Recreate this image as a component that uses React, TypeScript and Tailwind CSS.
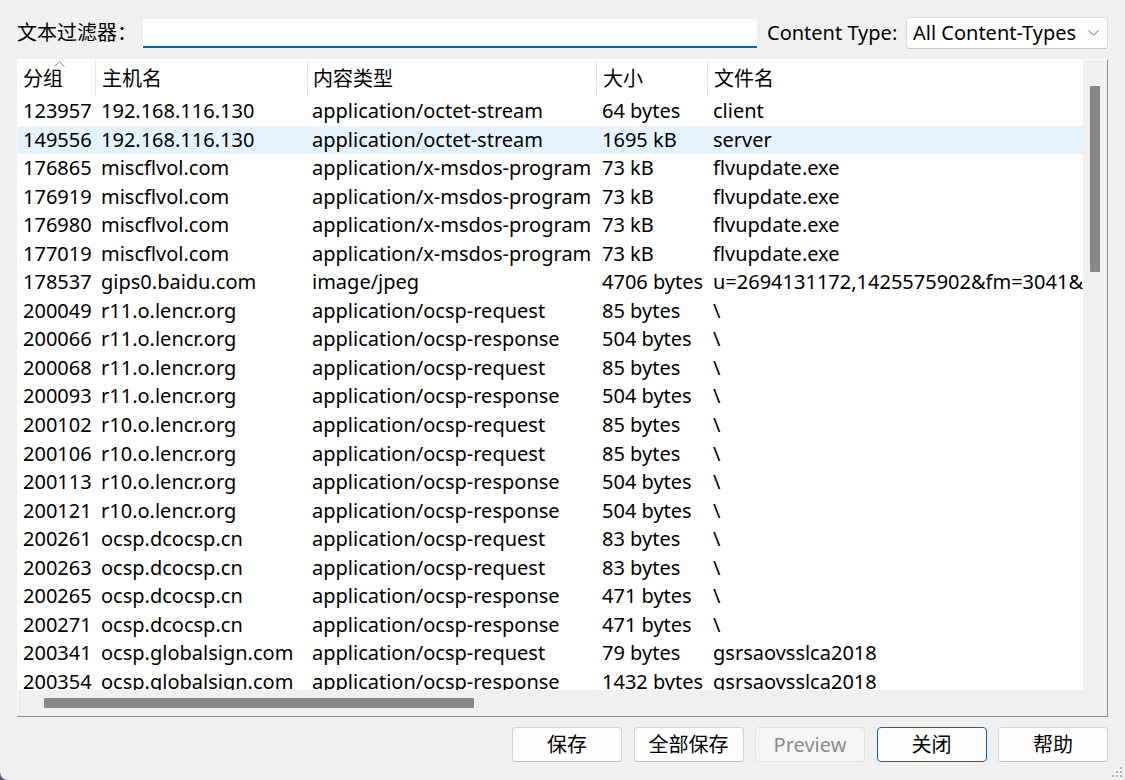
import React from "react";

// Export objects dialog: filter row, packet object list, buttons
const rows: [string, string, string, string, string][] = [
  ["123957", "192.168.116.130", "application/octet-stream", "64 bytes", "client"],
  ["149556", "192.168.116.130", "application/octet-stream", "1695 kB", "server"],
  ["176865", "miscflvol.com", "application/x-msdos-program", "73 kB", "flvupdate.exe"],
  ["176919", "miscflvol.com", "application/x-msdos-program", "73 kB", "flvupdate.exe"],
  ["176980", "miscflvol.com", "application/x-msdos-program", "73 kB", "flvupdate.exe"],
  ["177019", "miscflvol.com", "application/x-msdos-program", "73 kB", "flvupdate.exe"],
  ["178537", "gips0.baidu.com", "image/jpeg", "4706 bytes", "u=2694131172,1425575902&fm=3041&app=3041&f=JPEG"],
  ["200049", "r11.o.lencr.org", "application/ocsp-request", "85 bytes", "\\"],
  ["200066", "r11.o.lencr.org", "application/ocsp-response", "504 bytes", "\\"],
  ["200068", "r11.o.lencr.org", "application/ocsp-request", "85 bytes", "\\"],
  ["200093", "r11.o.lencr.org", "application/ocsp-response", "504 bytes", "\\"],
  ["200102", "r10.o.lencr.org", "application/ocsp-request", "85 bytes", "\\"],
  ["200106", "r10.o.lencr.org", "application/ocsp-request", "85 bytes", "\\"],
  ["200113", "r10.o.lencr.org", "application/ocsp-response", "504 bytes", "\\"],
  ["200121", "r10.o.lencr.org", "application/ocsp-response", "504 bytes", "\\"],
  ["200261", "ocsp.dcocsp.cn", "application/ocsp-request", "83 bytes", "\\"],
  ["200263", "ocsp.dcocsp.cn", "application/ocsp-request", "83 bytes", "\\"],
  ["200265", "ocsp.dcocsp.cn", "application/ocsp-response", "471 bytes", "\\"],
  ["200271", "ocsp.dcocsp.cn", "application/ocsp-response", "471 bytes", "\\"],
  ["200341", "ocsp.globalsign.com", "application/ocsp-request", "79 bytes", "gsrsaovsslca2018"],
  ["200354", "ocsp.globalsign.com", "application/ocsp-response", "1432 bytes", "gsrsaovsslca2018"],
];

const headers = ["分组", "主机名", "内容类型", "大小", "文件名"];

// column widths, written out in full for tailwind
const colW = ["w-[77px] pl-[5px]", "w-[212px] pl-[6px]", "w-[289px] pl-[5px]", "w-[111px] pl-[6px]", "flex-1 pl-[6px]"];

const font = { fontFamily: '"Noto Sans", "Noto Sans CJK SC", sans-serif' };

function Button({ label, variant }: { label: string; variant?: "default" | "disabled" }) {
  let cls = "bg-[#fdfdfd] border-[#d3d3d3] border-b-[#bdbdbd] text-black";
  if (variant === "default") cls = "bg-[#fdfdfd] border-[#0067c0] text-black";
  if (variant === "disabled") cls = "bg-[#f5f5f5] border-[#e3e3e3] text-[#8c8c8c]";
  return (
    <button className={`w-[110px] h-[35px] rounded-[4px] border text-[20px] leading-none flex items-center justify-center ${cls}`}>
      {label}
    </button>
  );
}

export default function App() {
  return (
    <div className="relative w-[1125px] h-[780px] bg-[#f0f0f0] overflow-hidden text-black" style={font}>
      {/* filter row */}
      <div className="flex items-center px-[17px] pt-[17px] h-[49px]">
        <span className="w-[126px] shrink-0 text-[20px] leading-[32px]">文本过滤器：</span>
        <div className="w-[614px] h-[29px] bg-white border-b-2 border-[#0067c0] rounded-t-[3px]"></div>
        <span className="ml-[10px] text-[20px] leading-[32px] whitespace-nowrap">Content Type:</span>
        <div className="ml-auto w-[202px] h-[32px] bg-white border border-[#dadada] border-b-[#c6c6c6] rounded-[4px] flex items-center pl-[6px] pr-[8px]">
          <span className="flex-1 text-[20px] leading-none whitespace-nowrap">All Content-Types</span>
          <svg width="11" height="6" viewBox="0 0 11 6">
            <path d="M0.5 0.5 L5.5 5 L10.5 0.5" fill="none" stroke="#6b6b6b" strokeWidth="1" />
          </svg>
        </div>
      </div>

      {/* object list */}
      <div className="mt-[10px] ml-[17px] w-[1091px] h-[658px] border-l border-t border-white border-r border-b border-r-[#8c9097] border-b-[#8c9097] grid grid-cols-[1065px_24px] grid-rows-[630px_26px]">
        <div className="bg-white flex flex-col overflow-hidden">
          <div className="relative h-[37px] shrink-0 flex text-[20px] leading-[37px]">
            {headers.map((h, i) => (
              <div key={h} className={`${colW[i]} whitespace-nowrap ${i > 0 ? "border-l border-[#e5e5e5]" : ""}`}>
                {h}
              </div>
            ))}
            <svg className="absolute left-[36px] top-[1px]" width="11" height="6" viewBox="0 0 11 6">
              <path d="M0.5 5.5 L5.5 0.8 L10.5 5.5" fill="none" stroke="#8a8a8a" strokeWidth="1" />
            </svg>
          </div>
          {rows.map((r, ri) => (
            <div
              key={r[0]}
              className={`h-[28.55px] shrink-0 flex text-[20px] leading-[28.55px] ${ri === 1 ? "bg-[#e5f3ff]" : ""}`}
            >
              {r.map((c, ci) => (
                <div key={ci} className={`${colW[ci]} whitespace-nowrap overflow-hidden`}>
                  {c}
                </div>
              ))}
            </div>
          ))}
        </div>

        {/* vertical scrollbar */}
        <div className="bg-[#f0f0f0] pt-[26px] pl-[7px]">
          <div className="w-[10px] h-[186px] bg-[#878787] rounded-[1px]"></div>
        </div>

        {/* horizontal scrollbar */}
        <div className="bg-[#f0f0f0] pt-[8px] pl-[26px]">
          <div className="w-[430px] h-[10px] bg-[#878787] rounded-[1px]"></div>
        </div>
        <div className="bg-[#f0f0f0]"></div>
      </div>

      {/* buttons */}
      <div className="flex justify-end gap-[11.5px] pr-[17px] mt-[10px]">
        <Button label="保存" />
        <Button label="全部保存" />
        <Button label="Preview" variant="disabled" />
        <Button label="关闭" variant="default" />
        <Button label="帮助" />
      </div>

      {/* resize grip */}
      <svg className="absolute right-[2px] bottom-[2px]" width="12" height="12" viewBox="0 0 12 12">
        <rect x="9" y="1" width="2" height="2" fill="#b4b4b4" />
        <rect x="5" y="5" width="2" height="2" fill="#b4b4b4" />
        <rect x="9" y="5" width="2" height="2" fill="#b4b4b4" />
        <rect x="1" y="9" width="2" height="2" fill="#b4b4b4" />
        <rect x="5" y="9" width="2" height="2" fill="#b4b4b4" />
        <rect x="9" y="9" width="2" height="2" fill="#b4b4b4" />
      </svg>

      {/* rounded window corner */}
      <div className="absolute left-0 bottom-0 w-[8px] h-[8px] bg-[#52627f]">
        <div className="w-full h-full bg-[#f0f0f0] rounded-bl-[8px]"></div>
      </div>
    </div>
  );
}
